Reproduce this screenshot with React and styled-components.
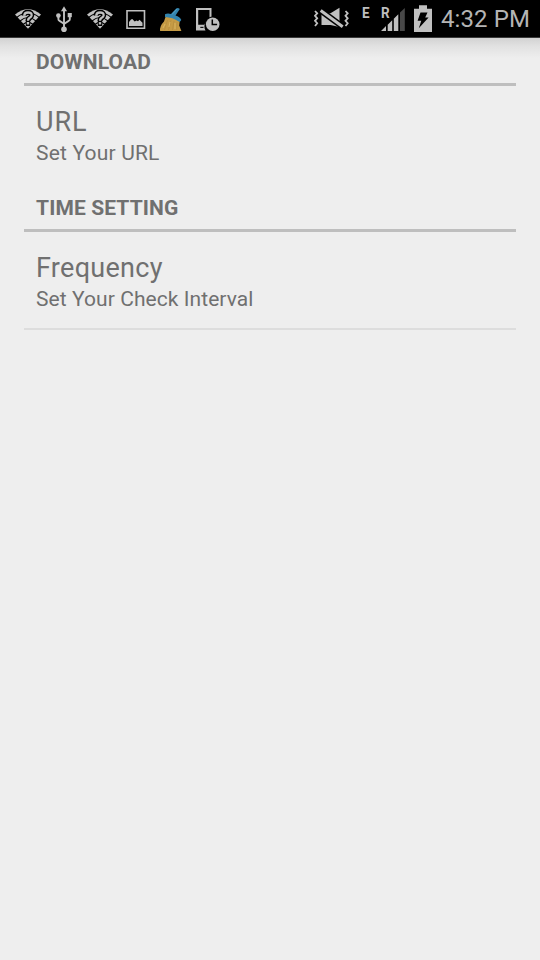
import React from "react";
import styled, { createGlobalStyle } from "styled-components";

const GlobalStyle = createGlobalStyle`
  * { box-sizing: border-box; }
  body { margin: 0; background: #eeeeee; }
`;

const Screen = styled.main`
  display: flex;
  flex-direction: column;
  height: 960px;
  width: 540px;
  overflow: hidden;
  background: #eeeeee;
  color: #707070;
  font-family: Roboto, "Noto Sans", sans-serif;
`;

const StatusBar = styled.header`
  display: flex;
  justify-content: space-between;
  flex: none;
  height: 38px;
  padding: 0 10px 0 15px;
  background: #000;
  border-bottom: 1px solid #3a3a3a;
`;

const Cluster = styled.div`
  display: flex;
  align-items: flex-start;
`;

const Icon = styled.svg`
  display: block;
  flex: none;
  margin-left: ${(p) => p.$gap || 0}px;
`;

const Roaming = styled.div`
  position: relative;
  margin-left: 11px;
`;

const Tag = styled.span`
  width: 8px;
  margin-left: 13px;
  padding-top: 4px;
  color: #bebebe;
  font: 700 15.5px/18px Roboto, sans-serif;
  transform: scaleX(0.87);
  transform-origin: left;
`;

const RoamingTag = styled(Tag)`
  position: absolute;
  top: 0;
  left: -0.5px;
  margin: 0;
`;

const Clock = styled.time`
  margin-left: 9px;
  width: 89px;
  color: #b4b4b4;
  font-size: 24px;
  line-height: 39px;
  white-space: nowrap;
  letter-spacing: 0.1px;
`;

const Preferences = styled.section`
  flex: 1;
  padding: 0 24px;
  background: linear-gradient(#d2d2d2, #e1e1e1 8px, #eeeeee 20px);
`;

const Heading = styled.h2`
  margin: 0;
  height: 48px;
  padding: 12px 12px 0;
  border-bottom: 3px solid #bebebe;
  font-size: 21px;
  line-height: 25px;
  font-weight: 700;
  letter-spacing: 0.12px;
`;

const Item = styled.div`
  height: ${(p) => p.$height}px;
  padding: 20px 12px 0;
  border-bottom: ${(p) => (p.$divider ? "2px solid #dddddd" : "0")};
`;

const Title = styled.div`
  font-size: 27px;
  line-height: 32px;
  letter-spacing: ${(p) => p.$track || 0}px;
`;

const Summary = styled.div`
  margin-top: 3px;
  font-size: 21px;
  line-height: 25px;
  letter-spacing: ${(p) => p.$track || 0}px;
`;

const LIGHT = "#c0c0c0";

function WifiQuestion({ gap }) {
  return (
    <Icon $gap={gap} width="26" height="38" viewBox="0 0 26 38">
      <path d="M0 14.5Q13 3.8 26 14.5L13 28.7Z" fill={LIGHT} />
      <g fill="none" stroke="#000" strokeWidth="1.1">
        <path d="M1.7 17.5Q13 8 24.3 17.5" />
        <path d="M5 21Q13 14 21 21" />
        <path d="M8 24.4Q13 20.4 18 24.4" />
      </g>
      <path d="M9.2 15.6Q9.4 12.4 13 12.4Q16.9 12.4 16.6 15.5Q16.3 17 14.4 18.2Q13 19.2 13 21" fill="none" stroke="#000" strokeWidth="5.2" />
      <path d="M9.2 15.7Q9.4 12.5 13 12.5Q16.9 12.5 16.6 15.4Q16.3 16.9 14.4 18Q13 19 13 20.8" fill="none" stroke={LIGHT} strokeWidth="2.3" />
      <path d="M10.8 21h4.4v5h-4.4z" fill="#000" />
      <path d="M11.8 22.1h2.4v2.4h-2.4z" fill={LIGHT} />
    </Icon>
  );
}

function Usb() {
  return (
    <Icon $gap={15} width="16" height="38" viewBox="0 0 16 38">
      <g fill="none" stroke={LIGHT} strokeWidth="1.9">
        <path d="M8 10v19M2.4 15v4.2q0 1.2 1.2 1.7L8 23.7M13.8 15v4.2q0 1.2-1.2 1.7L8 24" />
      </g>
      <g fill={LIGHT}>
        <path d="M8 6.3l3 5H5z" />
        <circle cx="2.4" cy="15.6" r="2.3" />
        <path d="M11.7 13h4.1v4.2h-4.1z" />
        <circle cx="8" cy="29.3" r="2.8" />
      </g>
    </Icon>
  );
}

function Picture() {
  return (
    <Icon $gap={13} width="20" height="38" viewBox="0 0 20 38">
      <path d="M1 10.7h17.5v17.6H1z" fill="none" stroke={LIGHT} strokeWidth="1.6" />
      <path d="M3 26v-4l2-2.5 1.3-.5 2.4 2.4 1.8-1 1.5.8 1.5-1.4 3 3V26z" fill={LIGHT} />
    </Icon>
  );
}

function Broom() {
  return (
    <Icon $gap={13} width="24" height="38" viewBox="0 0 24 38">
      <path d="M6.5 17Q13 16 20.7 21.2L20.2 25.5L22.4 31H1.1Q.5 26 5 21.5Z" fill="#c59b45" />
      <path d="M8.5 20L5.5 30M12 20L9.5 30M15 21L13.5 30M18 22L17.8 30" stroke="#b58d3e" strokeWidth=".8" />
      <path d="M4 28l2-4M10 27l1-5M16 29v-6" stroke="#dfbc68" strokeWidth=".8" />
      <path d="M6 14.3Q8.5 12.7 12 14L17.2 8.4Q19 7.2 20.8 9L16.5 15.6Q21 17 22.3 20L20.7 22Q13.5 17.2 6 17Z" fill="#3384ae" />
      <path d="M13 14.5l5-5.5" stroke="#55a3c7" />
    </Icon>
  );
}

function PhoneClock() {
  return (
    <Icon $gap={12} width="26" height="38" viewBox="0 0 26 38">
      <path d="M1 8h15.5v10.5A8 8 0 0 0 10.5 30.5H1zM3.2 10v14.8h7.1Q10.5 20 14.5 18V10z" fill={LIGHT} fillRule="evenodd" />
      <path d="M5.3 26.8h3.2v1.2H5.3z" fill="#111" />
      <circle cx="17.7" cy="24.2" r="7.7" fill="#000" />
      <circle cx="17.7" cy="24.2" r="6.8" fill={LIGHT} />
      <path d="M17.3 19.5v5h4.8" fill="none" stroke="#000" strokeWidth="1.5" />
    </Icon>
  );
}

function MutedVibrate() {
  return (
    <Icon width="35" height="38" viewBox="0 0 35 38">
      <path d="M7.5 13.3h9l9-5.6v19.2l-9-2H7.5z" fill={LIGHT} />
      <path d="M6 10L29.5 27.4" stroke="#000" strokeWidth="6" />
      <path d="M6.7 10.5L28.7 26.8" stroke={LIGHT} strokeWidth="3" />
      <path d="M1 11l2.2 2.3L1 15.8l2.2 2.5L1 20.8l2.2 2.4L1 26M31.5 11l2.2 2.3-2.2 2.5 2.2 2.5-2.2 2.5 2.2 2.4-2.2 2.8" fill="none" stroke={LIGHT} strokeWidth="1.8" />
    </Icon>
  );
}

function Signal() {
  return (
    <Icon width="24" height="38" viewBox="0 0 24 38">
      <path d="M0 31l5-5V31zM6.7 24.7l4.5-4.5V31H6.7zM12.8 18.7l4.5-4.5V31h-4.5z" fill={LIGHT} />
      <path d="M19 12.5l4.8-4.6V31H19z" fill="#484848" />
    </Icon>
  );
}

function Battery() {
  return (
    <Icon $gap={9} width="18" height="38" viewBox="0 0 18 38">
      <path d="M5 5.2h8v3.6h5V32H0V8.8h5z" fill={LIGHT} />
      <path d="M6.5 12.5h7l-2.3 5h3.4L4.8 28.2l2.5-7.5H3.6z" fill="#000" />
    </Icon>
  );
}

export default function App() {
  return (
    <Screen>
      <GlobalStyle />
      <StatusBar>
        <Cluster>
          <WifiQuestion />
          <Usb />
          <WifiQuestion gap={15} />
          <Picture />
          <Broom />
          <PhoneClock />
        </Cluster>
        <Cluster>
          <MutedVibrate />
          <Tag>E</Tag>
          <Roaming>
            <Signal />
            <RoamingTag>R</RoamingTag>
          </Roaming>
          <Battery />
          <Clock>4:32 PM</Clock>
        </Cluster>
      </StatusBar>
      <Preferences>
        <Heading>DOWNLOAD</Heading>
        <Item $height={98}>
          <Title $track={0.9}>URL</Title>
          <Summary $track={0.18}>Set Your URL</Summary>
        </Item>
        <Heading>TIME SETTING</Heading>
        <Item $height={98} $divider>
          <Title $track={0.28}>Frequency</Title>
          <Summary $track={0.07}>Set Your Check Interval</Summary>
        </Item>
      </Preferences>
    </Screen>
  );
}
